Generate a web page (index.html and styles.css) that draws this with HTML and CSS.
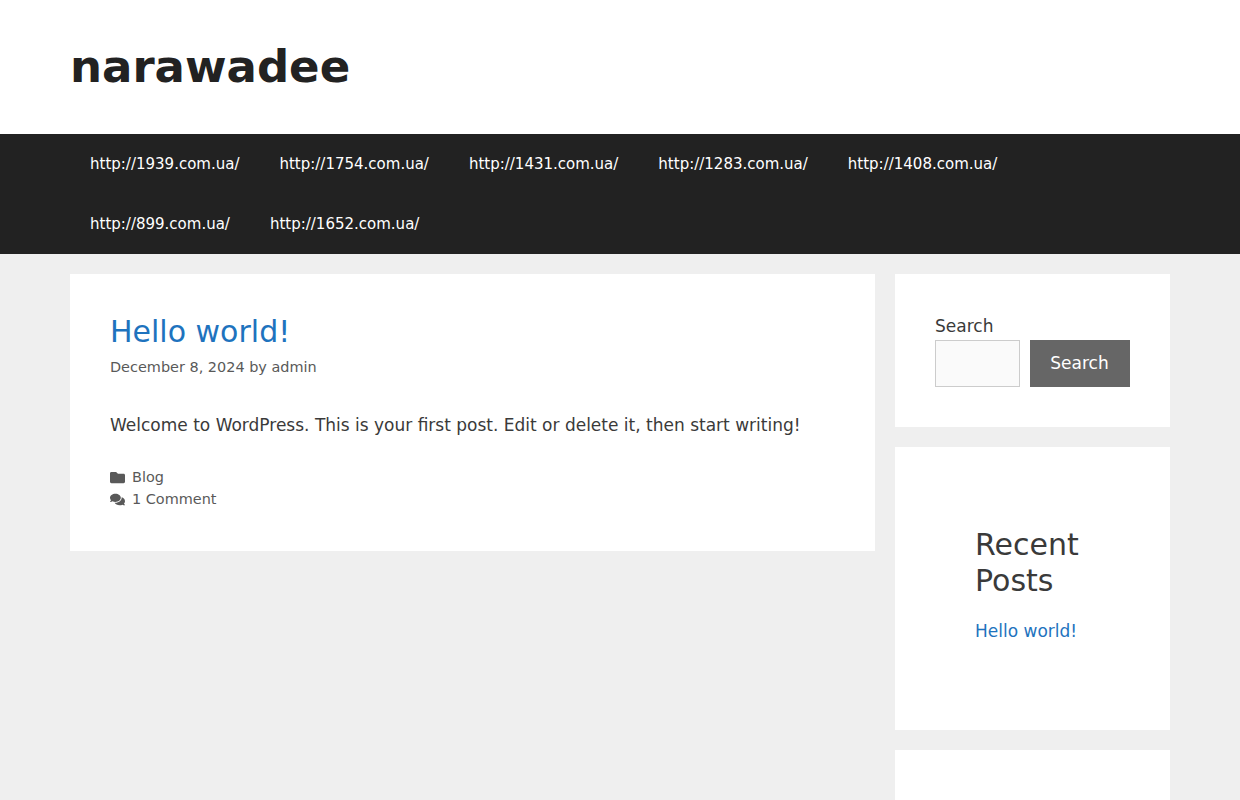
FILE: index.html
```html
<!DOCTYPE html>
<html lang="en">
<head>
<meta charset="utf-8">
<title>narawadee</title>
<link rel="stylesheet" href="styles.css">
</head>
<body>
<header class="site-header">
  <p class="site-title">narawadee</p>
</header>
<nav class="main-nav">
  <ul class="menu">
    <li><a href="#">http://1939.com.ua/</a></li>
    <li><a href="#">http://1754.com.ua/</a></li>
    <li><a href="#">http://1431.com.ua/</a></li>
    <li><a href="#">http://1283.com.ua/</a></li>
    <li><a href="#">http://1408.com.ua/</a></li>
    <li><a href="#">http://899.com.ua/</a></li>
    <li><a href="#">http://1652.com.ua/</a></li>
  </ul>
</nav>
<div class="site-content">
  <main class="content-area">
    <article class="post">
      <h2 class="entry-title"><a href="#">Hello world!</a></h2>
      <div class="entry-meta">December 8, 2024 by admin</div>
      <p class="entry-summary">Welcome to WordPress. This is your first post. Edit or delete it, then start writing!</p>
      <footer class="entry-footer">
        <div class="meta-row">
          <svg class="meta-icon" viewBox="0 0 512 512" aria-hidden="true"><path d="M464 128H272l-64-64H48C21.49 64 0 85.49 0 112v288c0 26.51 21.49 48 48 48h416c26.51 0 48-21.49 48-48V176c0-26.51-21.49-48-48-48z"/></svg>
          <span>Blog</span>
        </div>
        <div class="meta-row">
          <svg class="meta-icon" viewBox="0 0 576 512" aria-hidden="true"><path d="M416 192c0-88.4-93.1-160-208-160S0 103.600 0 192c0 34.300 14.100 65.900 38 92-13.400 30.200-35.500 54.200-35.800 54.500-2.200 2.300-2.800 5.700-1.500 8.700S4.800 352 8 352c36.600 0 66.900-12.300 88.700-25 32.200 15.700 70.300 25 111.300 25 114.900 0 208-71.600 208-160zm122 220c23.900-26 38-57.700 38-92 0-66.900-53.500-124.200-129.300-148.100.9 6.600 1.300 13.300 1.300 20.100 0 105.900-107.700 192-240 192-10.800 0-21.300-.8-31.700-1.900C207.800 439.600 281.800 480 368 480c41 0 79.100-9.200 111.300-25 21.800 12.700 52.100 25 88.700 25 3.200 0 6.100-1.900 7.300-4.800 1.300-2.900.7-6.300-1.500-8.700-.3-.3-22.400-24.200-35.800-54.500z"/></svg>
          <span>1 Comment</span>
        </div>
      </footer>
    </article>
  </main>
  <aside class="sidebar">
    <section class="widget search-widget">
      <label class="search-label" for="s">Search</label>
      <div class="search-row">
        <input class="search-input" id="s" type="text">
        <button class="search-button" type="button">Search</button>
      </div>
    </section>
    <section class="widget recent-widget">
      <h2 class="widget-title">Recent Posts</h2>
      <a class="recent-link" href="#">Hello world!</a>
    </section>
    <section class="widget empty-widget"></section>
  </aside>
</div>
</body>
</html>
```
FILE: styles.css
```css
* { box-sizing: border-box; }
html, body { margin: 0; padding: 0; }
body {
  height: 800px;
  overflow: hidden;
  background: #efefef;
  color: #3a3a3a;
  font-family: "DejaVu Sans", sans-serif;
  font-size: 17px;
  line-height: 1.5;
}
a { text-decoration: none; }
.site-header { background: #fff; padding: 40px 70px; height: 134px; }
.site-title {
  margin: 0;
  font-size: 45px;
  font-weight: 700;
  line-height: 54px;
  color: #222;
}
.main-nav { background: #222; }
.menu {
  list-style: none;
  margin: 0;
  padding: 0 70px;
  display: flex;
  flex-wrap: wrap;
}
.menu a {
  display: block;
  padding: 0 20px;
  line-height: 60px;
  font-size: 15px;
  color: #fff;
}
.site-content {
  display: flex;
  gap: 20px;
  padding: 20px 70px 0;
  align-items: flex-start;
}
.content-area { width: 805px; flex: none; }
.post { background: #fff; padding: 40px; height: 277px; }
.entry-title {
  margin: 0;
  font-size: 30px;
  font-weight: 400;
  line-height: 36px;
}
.entry-title a, .recent-link { color: #1e73be; }
.entry-meta { margin-top: 4px; font-size: 14.45px; line-height: 26px; color: #595959; }
.entry-summary { margin: 33px 0 0; font-size: 17px; line-height: 25.5px; }
.entry-footer { margin-top: 28px; font-size: 14.45px; color: #595959; }
.meta-row { display: flex; align-items: center; height: 22px; }
.meta-icon { width: 15px; height: 15px; margin-right: 7px; fill: #595959; flex: none; }
.sidebar { width: 275px; flex: none; display: flex; flex-direction: column; gap: 20px; }
.widget { background: #fff; padding: 40px; }
.search-widget { height: 153px; }
.search-label { display: block; line-height: 26px; color: #3a3a3a; margin-top: -1px; margin-bottom: 1px; }
.search-row { display: flex; gap: 10px; }
.search-input {
  width: 85px;
  height: 47px;
  border: 1px solid #ccc;
  background: #fafafa;
  padding: 0;
}
.search-button {
  flex: none;
  width: 100px;
  height: 47px;
  border: 0;
  background: #666;
  color: #fff;
  font: inherit;
  padding: 0 1px 0 0;
}
.recent-widget { height: 283px; padding: 80px; padding-right: 40px; }
.widget-title {
  margin: 0 0 19px;
  font-size: 30px;
  font-weight: 400;
  line-height: 36px;
  color: #3a3a3a;
}
.recent-link { display: block; line-height: 26px; }
.empty-widget { height: 100px; }
```
